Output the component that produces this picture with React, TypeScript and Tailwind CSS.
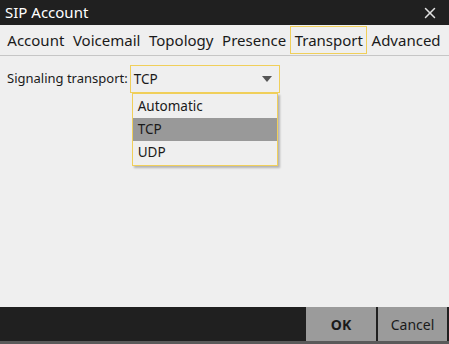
import { X } from 'lucide-react'

const tabs = ['Account', 'Voicemail', 'Topology', 'Presence', 'Transport', 'Advanced']
const options = ['Automatic', 'TCP', 'UDP']

export default function App() {
  const active = 'Transport'
  const selected = 'TCP'

  return (
    <div
      className="w-[449px] h-[344px] flex flex-col bg-[#efefef] text-[#1a1a1a]"
      style={{ fontFamily: '"Noto Sans", "Open Sans", sans-serif' }}
    >
      <div className="h-[25px] shrink-0 bg-[#202020] flex items-center justify-between pl-[5px] pr-[10px]">
        <span className="text-white text-[15px] leading-none">SIP Account</span>
        <X size={18} strokeWidth={2} className="text-[#e0e0e0]" />
      </div>

      <div className="h-[31px] shrink-0 flex items-end pl-[3px] border-b border-[#c6c6c6]">
        {tabs.map((t) => (
          <div
            key={t}
            className={`h-[28px] mb-[1px] px-[3.3px] flex items-center text-[15px] border ${
              t === active ? 'border-[#f0cf5a]' : 'border-transparent'
            }`}
          >
            {t}
          </div>
        ))}
      </div>

      <div className="flex-1 px-[7px] pt-[9px]">
        <div className="flex items-center gap-[2px]">
          <span className="text-[13px]">Signaling transport:</span>
          <div className="relative">
            <div className="w-[150px] h-[28px] border border-[#f0cf5a] flex items-center justify-between pl-[3px] pr-[7px] text-[13.5px]">
              <span>{selected}</span>
              <svg width="10" height="6" viewBox="0 0 10 6">
                <path d="M0 0h10L5 6z" fill="#555" />
              </svg>
            </div>
            <div className="absolute left-[2px] top-[28px] w-[146px] bg-[#efefef] border border-[#f0cf5a] shadow-[2px_2px_2px_rgba(0,0,0,0.25)] text-[13.5px] py-[1px]">
              {options.map((o) => (
                <div
                  key={o}
                  className={`h-[23px] flex items-center px-[5px] ${o === selected ? 'bg-[#999999]' : ''}`}
                >
                  {o}
                </div>
              ))}
            </div>
          </div>
        </div>
      </div>

      <div className="h-[37px] shrink-0 bg-[#202020] border-b-[3px] border-[#5a5a5a] flex justify-end gap-[2px] pr-[2px]">
        <button className="w-[70px] bg-[#9b9b9b] text-[14px] font-bold">OK</button>
        <button className="w-[69px] bg-[#9b9b9b] text-[14px]">Cancel</button>
      </div>
    </div>
  )
}
